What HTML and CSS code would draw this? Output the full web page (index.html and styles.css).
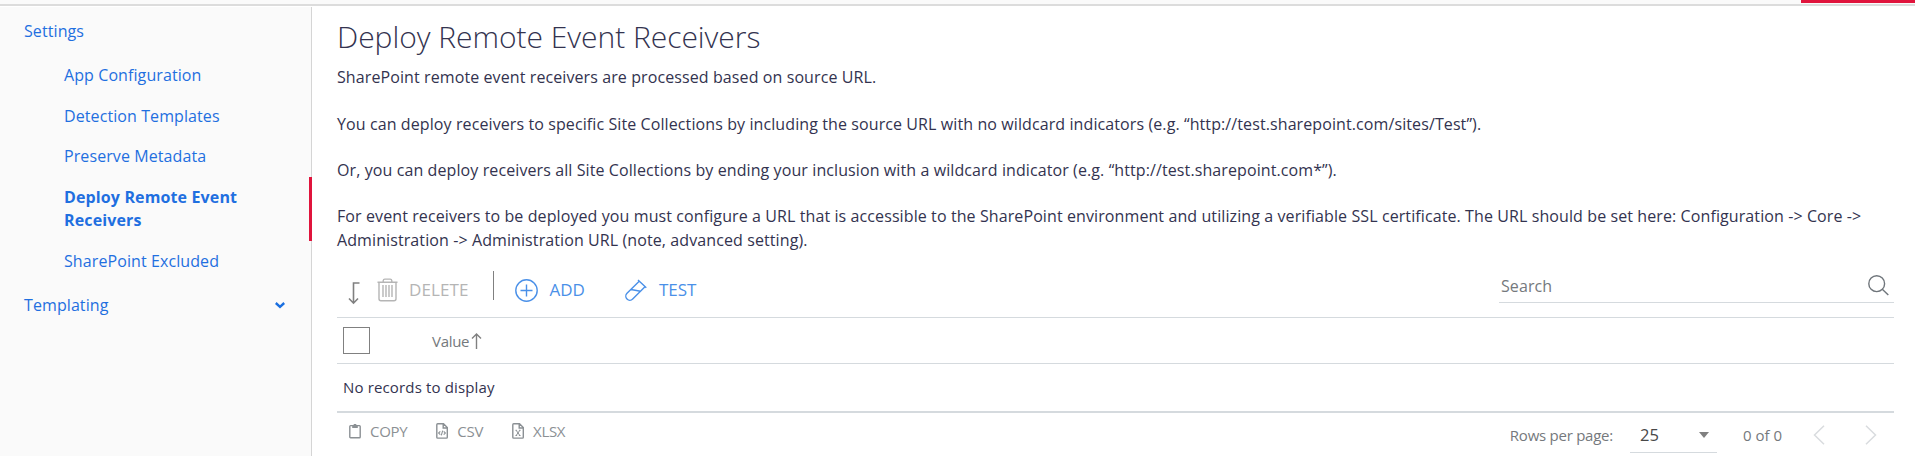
FILE: index.html
```html
<!DOCTYPE html>
<html lang="en">
<head>
<meta charset="utf-8">
<title>Deploy Remote Event Receivers</title>
<link rel="stylesheet" href="styles.css">
</head>
<body>
<header class="topbar"><div class="topbar-active"></div></header>
<div class="layout">
  <nav class="sidebar">
    <a class="nav-group">Settings</a>
    <div class="nav-items">
      <a class="nav-item">App Configuration</a>
      <a class="nav-item">Detection Templates</a>
      <a class="nav-item">Preserve Metadata</a>
      <a class="nav-item nav-active">Deploy Remote Event Receivers</a>
      <a class="nav-item">SharePoint Excluded</a>
    </div>
    <a class="nav-group nav-group-last"><span>Templating</span>
      <svg class="nav-chevron" width="10" height="7" viewBox="0 0 10 7"><path d="M.8 1l4.200 3.800L9.200 1" fill="none" stroke="#1a6fe0" stroke-width="2.400"/></svg>
    </a>
  </nav>
  <main class="content">
    <h1 class="title">Deploy Remote Event Receivers</h1>
    <div class="intro">
      <p>SharePoint remote event receivers are processed based on source URL.</p>
      <p>You can deploy receivers to specific Site Collections by including the source URL with no wildcard indicators (e.g. “http://test.sharepoint.com/sites/Test”).</p>
      <p>Or, you can deploy receivers all Site Collections by ending your inclusion with a wildcard indicator (e.g. “http://test.sharepoint.com*”).</p>
      <p>For event receivers to be deployed you must configure a URL that is accessible to the SharePoint environment and utilizing a verifiable SSL certificate. The URL should be set here: Configuration -&gt; Core -&gt; Administration -&gt; Administration URL (note, advanced setting).</p>
    </div>
    <div class="toolbar">
      <svg class="i-arrow" width="12" height="23" viewBox="0 0 12 23"><path d="M11.500 1H5.500V21M1 16.500l4.500 4.700 4.500-4.700" fill="none" stroke="#808080" stroke-width="1.600"/></svg>
      <a class="tool tool-delete">
        <svg width="21" height="24" viewBox="0 0 21 24" fill="none" stroke="#b5b5b5" stroke-width="1.400"><path d="M.5 4.200H20.500M6.200 4V2.500Q6.400 1.100 7.800 1.100h5.400q1.400 0 1.600 1.400V4M2 4.500v16.200q0 2 2 2h13q2 0 2-2V4.500M6 7v12M9 7v12M12 7v12M15 7v12"/></svg>
        <span>DELETE</span>
      </a>
      <span class="divider"></span>
      <a class="tool tool-add">
        <svg width="23" height="23" viewBox="0 0 23 23" fill="none" stroke="#4a90e8" stroke-width="1.400"><circle cx="11.500" cy="11.500" r="10.700"/><path d="M11.500 5.500v12M5.500 11.500h12"/></svg>
        <span>ADD</span>
      </a>
      <a class="tool tool-test">
        <svg width="22" height="22" viewBox="0 0 22 22" fill="none" stroke="#4a90e8" stroke-width="1.400"><path d="M13 1L21.300 8.800M14.200 2.200L2 14.300a4 4 0 0 0 5.700 5.700L20 7.700M6 10.500l9.500 1.700"/></svg>
        <span>TEST</span>
      </a>
      <div class="search"><span>Search</span>
        <svg width="21" height="21" viewBox="0 0 21 21" fill="none" stroke="#6f757b" stroke-width="1.400"><circle cx="8.700" cy="8.700" r="7.900"/><path d="M14.300 14.300l6 5.800"/></svg>
      </div>
    </div>
    <div class="thead">
      <span class="checkbox"></span><span class="col-name">Value</span>
      <svg class="i-sort" width="11" height="16" viewBox="0 0 11 16"><path d="M5.500 16V1.200M1 5.500l4.500-4.400L10 5.500" fill="none" stroke="#808080" stroke-width="1.400"/></svg>
    </div>
    <div class="empty">No records to display</div>
    <footer class="footer">
      <a class="export export-copy"><svg width="12" height="16" viewBox="0 0 12 16" fill="none" stroke="#8b9094" stroke-width="1.400"><rect x=".8" y="2.600" width="10.400" height="12.200" rx=".8"/><path d="M3.200 5V2.200h1.500V1h2.600v1.200h1.500V5z" fill="#8b9094" stroke="none"/></svg><span>COPY</span></a>
      <a class="export export-csv"><svg width="12" height="16" viewBox="0 0 12 16" fill="none" stroke="#8b9094" stroke-width="1.400"><path d="M1.700.8H7.500L11.300 4.600V14.200q0 .9-.9.9H1.700q-.9 0-.9-.9V1.700q0-.9.900-.9zM7.200.8V5h4"/><path d="M4.300 8.300L2.600 10l1.700 1.700M7.700 8.300L9.400 10l-1.700 1.700M6.700 7.700l-1.400 4.600" stroke-width="1.100"/></svg><span>CSV</span></a>
      <a class="export export-xlsx"><svg width="12" height="16" viewBox="0 0 12 16" fill="none" stroke="#8b9094" stroke-width="1.400"><path d="M1.700.8H7.500L11.300 4.600V14.200q0 .9-.9.9H1.700q-.9 0-.9-.9V1.700q0-.9.900-.9zM7.200.8V5h4"/><path d="M4.300 7.500l3.400 4.800M7.700 7.500l-3.400 4.800M3.500 7.300h1.600M6.900 7.300h1.600M3.500 12.500h1.600M6.900 12.500h1.600" stroke-width="1"/></svg><span>XLSX</span></a>
      <div class="pager">
        <span class="rows-label">Rows per page:</span>
        <span class="rows-select"><span>25</span><svg width="10" height="6" viewBox="0 0 10 6"><path d="M0 0h10L5 6z" fill="#808080"/></svg></span>
        <span class="count">0 of 0</span>
        <svg class="prev" width="12" height="20" viewBox="0 0 12 20"><path d="M11 .7L1.500 10 11 19.300" fill="none" stroke="#d9dcdf" stroke-width="1.500"/></svg>
        <svg class="next" width="12" height="20" viewBox="0 0 12 20"><path d="M1 .7L10.500 10 1 19.300" fill="none" stroke="#d9dcdf" stroke-width="1.500"/></svg>
      </div>
    </footer>
  </main>
</div>
</body>
</html>
```
FILE: styles.css
```css
* { box-sizing: border-box; }
body { margin: 0; height: 456px; overflow: hidden; background: #fff; font: 16px/24px "Open Sans", sans-serif; color: #33334f; }
svg { display: block; flex: none; }
.topbar { height: 6px; background: #fafafa; border-bottom: 2px solid #dcdcdc; display: flex; justify-content: flex-end; }
.topbar-active { width: 114px; height: 3px; background: #e0143c; }
.layout { display: flex; height: 449px; margin-top: 1px; }
.sidebar { width: 312px; height: 449px; flex: none; background: #fafafa; border-right: 1px solid #d5d5d5; color: #1f6fe0; line-height: 23.300px; letter-spacing: .09px; }
.nav-group { display: flex; justify-content: space-between; align-items: flex-start; padding: 13px 26px 0 24px; height: 48.300px; }
.nav-items { display: flex; flex-direction: column; }
.nav-item { padding: 8.700px 60px 8.700px 64px; }
.nav-active { font-weight: 700; border-right: 3px solid #e0143c; margin-right: -1px; padding-right: 52px; letter-spacing: .13px; }
.nav-group-last { padding-top: 12px; }
.nav-chevron { margin-top: 8px; }
.content { flex: 1; padding: 0 21px 0 25px; }
.title { margin: 0; font-weight: 300; font-size: 30px; line-height: 40px; padding-top: 10px; letter-spacing: -.03px; }
.intro { margin-top: 8px; height: 189px; letter-spacing: .098px; }
.intro p { margin: 0 0 22px; }
.intro p:first-child { margin-bottom: 23px; }
.toolbar { height: 64px; border-bottom: 1px solid #d5dade; display: flex; align-items: flex-start; font-size: 17px; }
.tool { display: flex; align-items: center; height: 24px; color: #4a90e8; }
.i-arrow { margin: 28px 0 0 11px; }
.tool-delete { margin: 24px 0 0 17px; gap: 11px; color: #b5b5b5; letter-spacing: .1px; }
.divider { width: 1px; height: 29px; background: #808080; margin: 17px 21px 0 24px; }
.tool-add { margin-top: 24px; gap: 12px; }
.tool-test { margin: 24px 0 0 40px; gap: 12px; }
.search { margin: 15px 0 0 auto; width: 395px; height: 34px; border-bottom: 1px solid #d5dade; display: flex; justify-content: space-between; align-items: center; padding: 0 5px 0 2px; font-size: 16px; color: #75797d; letter-spacing: .1px; }
.thead { height: 46px; border-bottom: 1px solid #d5dade; display: flex; align-items: center; padding-left: 6px; font-size: 15px; color: #75797d; }
.checkbox { width: 27px; height: 27px; border: 1px solid #808080; }
.col-name { margin-left: 62px; letter-spacing: -.3px; }
.i-sort { margin-left: 2px; }
.empty { height: 49px; border-bottom: 2px solid #d5dade; padding: 11px 0 0 6px; font-size: 15px; letter-spacing: .15px; }
.footer { display: flex; align-items: flex-start; color: #8b9094; font-size: 15px; height: 44px; }
.export { display: flex; align-items: center; height: 24px; margin-top: 6px; gap: 9px; letter-spacing: -.3px; }
.export-copy { margin-left: 12px; }
.export-csv { margin-left: 29px; }
.export-xlsx { margin-left: 29px; }
.pager { margin-left: auto; display: flex; align-items: center; height: 44px; color: #75797d; }
.rows-label { letter-spacing: -.25px; }
.rows-select { width: 87px; height: 36px; margin: 0 26px 0 17px; border-bottom: 1px solid #d5dade; display: flex; align-items: center; justify-content: space-between; padding: 0 8px 0 10px; font-size: 16.500px; color: #484848; }
.prev { margin-left: 31px; }
.next { margin: 0 17px 0 40px; }
```
